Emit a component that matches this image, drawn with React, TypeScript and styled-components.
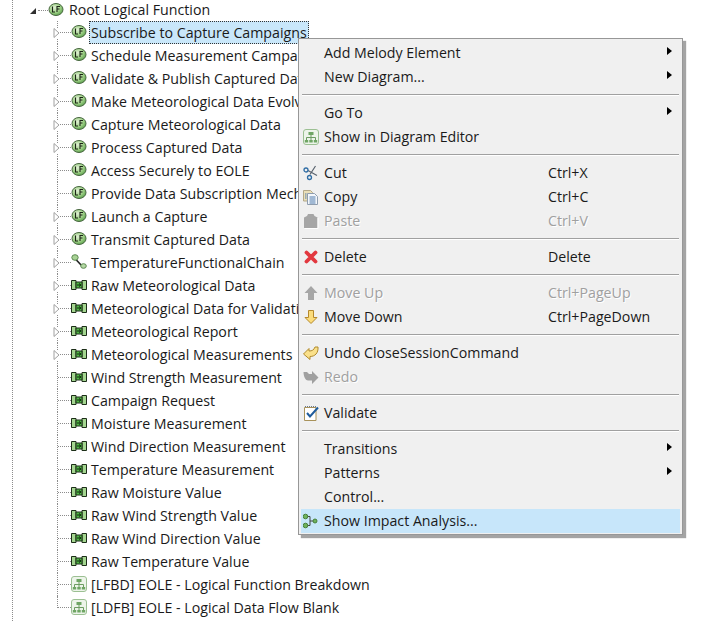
import React from 'react';
import styled, { createGlobalStyle } from 'styled-components';

const Global = createGlobalStyle`
	html, body {
		margin: 0;
		padding: 0;
		background: #ffffff;
	}
	#root {
		font-family: 'Open Sans', 'Noto Sans', 'Liberation Sans', sans-serif;
	}
`;

const Page = styled.div`
	position: relative;
	width: 702px;
	height: 621px;
	overflow: hidden;
	background: #ffffff;
	color: #1a1a1a;
	font-size: 14.2px;
`;

const Tree = styled.div`
	box-sizing: border-box;
	height: 621px;
	margin-left: 12px;
	border-left: 1px dotted #8c8c8c;
`;

const RootRow = styled.div`
	position: relative;
	display: flex;
	align-items: center;
	height: 21px;
	padding-left: 17px;
`;

const RootArrow = styled.span`
	width: 0;
	height: 0;
	margin-top: 1px;
	border-style: solid;
	border-width: 0 0 6px 6px;
	border-color: transparent transparent #303030 transparent;
`;

const RootDots = styled.span`
	width: 10px;
	margin-left: 2px;
	border-bottom: 1px dotted #8c8c8c;
`;

const RootLabel = styled.span`
	margin: -2px 0 0 5px;
	white-space: nowrap;
`;

const Children = styled.div`
	margin-left: 44px;
`;

const Row = styled.div<{ $last?: boolean }>`
	position: relative;
	display: flex;
	align-items: center;
	box-sizing: border-box;
	height: 23px;
	border-left: ${(p) => (p.$last ? 'none' : '1px dotted #8c8c8c')};
`;

const Elbow = styled.span<{ $last?: boolean }>`
	box-sizing: border-box;
	align-self: flex-start;
	width: ${(p) => (p.$last ? 14 : 13)}px;
	height: 12px;
	border-bottom: 1px dotted #8c8c8c;
	border-left: ${(p) => (p.$last ? '1px dotted #8c8c8c' : 'none')};
`;

const Twistie = styled.svg`
	position: absolute;
	left: -5px;
	top: 7px;
	width: 7px;
	height: 10px;
	background: #ffffff;
`;

const IconBox = styled.svg`
	flex: none;
	width: 16px;
	height: 16px;
	margin-top: -2px;
`;

const Label = styled.span<{ $selected?: boolean }>`
	box-sizing: border-box;
	display: block;
	height: 23px;
	margin-left: 2px;
	padding: 0 2px;
	line-height: 23px;
	white-space: nowrap;
	background: ${(p) => (p.$selected ? '#c9e7fa' : 'transparent')};
	outline: ${(p) => (p.$selected ? '1px dotted #333333' : 'none')};
	outline-offset: -1px;
`;

const Menu = styled.div`
	position: absolute;
	left: 298px;
	top: 38px;
	box-sizing: border-box;
	width: 385px;
	height: 497px;
	padding: 2px;
	background: #f0f0f0;
	border: 1px solid #979797;
	box-shadow: 3px 3px 1px rgba(90, 90, 90, 0.55);
`;

const MenuRow = styled.div<{ $active?: boolean; $disabled?: boolean }>`
	display: grid;
	grid-template-columns: 23px 224px 1fr 13px;
	align-items: center;
	height: 24px;
	color: ${(p) => (p.$disabled ? '#a0a0a0' : '#1a1a1a')};
	background: ${(p) => (p.$active ? '#c7e6fa' : 'transparent')};
	text-shadow: ${(p) => (p.$disabled ? '1px 1px 0 #ffffff' : 'none')};
`;

const MenuIcon = styled.span`
	display: flex;
	align-items: center;
	padding-left: 2px;
	height: 24px;
	svg {
		display: block;
	}
`;

const MenuText = styled.span`
	margin-top: -2px;
	white-space: nowrap;
`;

const Shortcut = styled.span`
	margin-top: -2px;
	white-space: nowrap;
`;

const SubArrow = styled.span`
	width: 0;
	height: 0;
	margin-top: -4px;
	border-style: solid;
	border-width: 4.5px 0 4.5px 5px;
	border-color: transparent transparent transparent #000000;
`;

const Separator = styled.div`
	box-sizing: border-box;
	height: 12px;
	padding-top: 5px;
	margin: 0 1px;
	&::after {
		content: '';
		display: block;
		height: 1px;
		background: #a0a0a0;
		box-shadow: 0 1px 0 #ffffff;
	}
`;

const FunctionIcon = () => (
	<IconBox viewBox="0 0 16 16">
		<defs>
			<radialGradient id="lf" cx="0.4" cy="0.35" r="0.75">
				<stop offset="0" stopColor="#e0f0d4" />
				<stop offset="0.55" stopColor="#9ccf84" />
				<stop offset="1" stopColor="#4c9440" />
			</radialGradient>
		</defs>
		<ellipse cx="8" cy="7.5" rx="7" ry="6" fill="url(#lf)" stroke="#46663e" />
		<path d="M4.500 4.500v5.500h2.500M9 10V4.500h3M9 7h2.500" fill="none" stroke="#1a2415" strokeWidth="1.100" />
	</IconBox>
);

const ExchangeIcon = () => (
	<IconBox viewBox="0 0 16 16">
		<path d="M.5 3.500h4.500v9H.5zM11 3.500h4.500v9H11z" fill="#a4d690" stroke="#1c2e18" />
		<path d="M5 5h6v6H5z" fill="#4fb544" stroke="#1c2e18" />
		<path d="M6 8h3.500M8 6.500L10 8 8 9.500" fill="none" stroke="#0f2a0c" />
	</IconBox>
);

const ChainIcon = () => (
	<IconBox viewBox="0 0 16 16">
		<path d="M4 4.500l7 7.500" stroke="#222222" strokeWidth="1.600" />
		<ellipse cx="4" cy="3.500" rx="3.200" ry="2.800" fill="#a9d396" stroke="#5d8a52" />
		<ellipse cx="12.500" cy="12" rx="2.800" ry="2.300" fill="#b5d8a5" stroke="#5d8a52" />
	</IconBox>
);

const DiagramIcon = () => (
	<svg viewBox="0 0 16 16" width="16" height="16">
		<rect x="0.5" y="0.5" width="15" height="15" rx="2.5" fill="#edf4ea" stroke="#9cc093" />
		<path d="M8 6v2.500M3.500 11V8.500h9V11M8 8.500V11" fill="none" stroke="#6d9c62" />
		<path d="M5.500 3h5v3h-5zM1.800 11h3.400v2.500H1.800zM6.300 11h3.400v2.500H6.300zM10.800 11h3.400v2.500h-3.400z" fill="#6fa564" />
	</svg>
);

const ScissorsIcon = () => (
	<svg viewBox="0 0 16 16" width="16" height="16" fill="none">
		<path d="M12.500 1L7 9.500M5 5.500l9 5" stroke="#59636e" strokeWidth="1.200" />
		<circle cx="3" cy="5" r="2" stroke="#2f6da5" strokeWidth="1.300" />
		<circle cx="6.500" cy="12.500" r="2" stroke="#2f6da5" strokeWidth="1.300" />
	</svg>
);

const CopyIcon = () => (
	<svg viewBox="0 0 16 16" width="16" height="16">
		<path d="M.5 1.500h7l2 2V12H.5z" fill="#eadfb8" stroke="#b3a888" />
		<path d="M4.500 4.500h7l3 3V15.500h-10z" fill="#f4f7fb" stroke="#8f9dae" />
		<path d="M6.500 8h6M6.500 10h6M6.500 12h6M6.500 14h6M2 5h1.500M2 7h1.500M2 9h1.500" stroke="#4f7bac" />
	</svg>
);

const PasteIcon = () => (
	<svg viewBox="0 0 16 16" width="16" height="16">
		<path d="M1 4.500l3-1.500 1-2h5.500l1 2 3 1.500V15H1z" fill="#a6a6a6" />
		<path d="M15 5v10.500H1.500" fill="none" stroke="#ffffff" />
	</svg>
);

const DeleteIcon = () => (
	<svg viewBox="0 0 16 16" width="16" height="16">
		<path d="M3.500 3.500l9 9M12.500 3.500l-9 9" stroke="#e2383f" strokeWidth="3.800" strokeLinecap="round" />
	</svg>
);

const MoveUpIcon = () => (
	<svg viewBox="0 0 16 16" width="16" height="16">
		<path d="M8 1l6.500 7H11v7H5V8H1.500z" fill="#a6a6a6" />
	</svg>
);

const MoveDownIcon = () => (
	<svg viewBox="0 0 16 16" width="16" height="16">
		<path d="M5.500 1.500h5v7H14L8 14.500 2 8.500h3.500z" fill="#fbdc7c" stroke="#b5892c" />
	</svg>
);

const UndoIcon = () => (
	<svg viewBox="0 0 16 16" width="16" height="16">
		<path d="M.5 9L6 3.500V6c3 0 5-1 6-4h3c.5 6-3 9.500-8 9.500v3z" fill="#fae08a" stroke="#b08a2c" strokeLinejoin="round" />
	</svg>
);

const RedoIcon = () => (
	<svg viewBox="0 0 16 16" width="16" height="16">
		<path d="M.5 3H4l2 2h3V2l6.500 6.500L9 15v-3.500H5C3 11.500.5 8 .5 3z" fill="#a0a0a0" />
	</svg>
);

const ValidateIcon = () => (
	<svg viewBox="0 0 16 16" width="16" height="16">
		<path d="M1.500 2.500h11.500v13H1.500z" fill="#ffffff" stroke="#a8925a" />
		<path d="M2 1.500h11" stroke="#6a7a90" strokeDasharray="1 1" />
		<path d="M4 8l3 3.500 8-9" fill="none" stroke="#1f5c9c" strokeWidth="2" />
	</svg>
);

const ImpactIcon = () => (
	<svg viewBox="0 0 16 16" width="16" height="16">
		<path d="M3 3.500h4v9H3M7 8h5" fill="none" stroke="#444444" />
		<circle cx="2.500" cy="3.500" r="2.300" fill="#6fb25c" stroke="#47803a" />
		<circle cx="2.500" cy="12.500" r="2.300" fill="#6fb25c" stroke="#47803a" />
		<circle cx="12" cy="8" r="2" fill="#6fb25c" stroke="#47803a" />
	</svg>
);

type Kind = 'function' | 'exchange' | 'chain' | 'diagram';

const nodes: { label: string; kind: Kind; open?: boolean }[] = [
	{ label: 'Subscribe to Capture Campaigns', kind: 'function', open: true },
	{ label: 'Schedule Measurement Campaigns', kind: 'function', open: true },
	{ label: 'Validate & Publish Captured Data', kind: 'function', open: true },
	{ label: 'Make Meteorological Data Evolve', kind: 'function', open: true },
	{ label: 'Capture Meteorological Data', kind: 'function', open: true },
	{ label: 'Process Captured Data', kind: 'function', open: true },
	{ label: 'Access Securely to EOLE', kind: 'function' },
	{ label: 'Provide Data Subscription Mechanism', kind: 'function' },
	{ label: 'Launch a Capture', kind: 'function', open: true },
	{ label: 'Transmit Captured Data', kind: 'function', open: true },
	{ label: 'TemperatureFunctionalChain', kind: 'chain', open: true },
	{ label: 'Raw Meteorological Data', kind: 'exchange', open: true },
	{ label: 'Meteorological Data for Validation', kind: 'exchange', open: true },
	{ label: 'Meteorological Report', kind: 'exchange', open: true },
	{ label: 'Meteorological Measurements', kind: 'exchange', open: true },
	{ label: 'Wind Strength Measurement', kind: 'exchange' },
	{ label: 'Campaign Request', kind: 'exchange' },
	{ label: 'Moisture Measurement', kind: 'exchange' },
	{ label: 'Wind Direction Measurement', kind: 'exchange' },
	{ label: 'Temperature Measurement', kind: 'exchange' },
	{ label: 'Raw Moisture Value', kind: 'exchange' },
	{ label: 'Raw Wind Strength Value', kind: 'exchange' },
	{ label: 'Raw Wind Direction Value', kind: 'exchange' },
	{ label: 'Raw Temperature Value', kind: 'exchange' },
	{ label: '[LFBD] EOLE - Logical Function Breakdown', kind: 'diagram' },
	{ label: '[LDFB] EOLE - Logical Data Flow Blank', kind: 'diagram' },
];

function NodeIcon({ kind }: { kind: Kind }) {
	if (kind === 'function') return <FunctionIcon />;
	if (kind === 'exchange') return <ExchangeIcon />;
	if (kind === 'chain') return <ChainIcon />;
	return (
		<IconBox as="span">
			<DiagramIcon />
		</IconBox>
	);
}

type Entry =
	| 'sep'
	| {
			label: string;
			icon?: React.ReactNode;
			shortcut?: string;
			sub?: boolean;
			disabled?: boolean;
			active?: boolean;
	  };

const entries: Entry[] = [
	{ label: 'Add Melody Element', sub: true },
	{ label: 'New Diagram...', sub: true },
	'sep',
	{ label: 'Go To', sub: true },
	{ label: 'Show in Diagram Editor', icon: <DiagramIcon /> },
	'sep',
	{ label: 'Cut', icon: <ScissorsIcon />, shortcut: 'Ctrl+X' },
	{ label: 'Copy', icon: <CopyIcon />, shortcut: 'Ctrl+C' },
	{ label: 'Paste', icon: <PasteIcon />, shortcut: 'Ctrl+V', disabled: true },
	'sep',
	{ label: 'Delete', icon: <DeleteIcon />, shortcut: 'Delete' },
	'sep',
	{ label: 'Move Up', icon: <MoveUpIcon />, shortcut: 'Ctrl+PageUp', disabled: true },
	{ label: 'Move Down', icon: <MoveDownIcon />, shortcut: 'Ctrl+PageDown' },
	'sep',
	{ label: 'Undo CloseSessionCommand', icon: <UndoIcon /> },
	{ label: 'Redo', icon: <RedoIcon />, disabled: true },
	'sep',
	{ label: 'Validate', icon: <ValidateIcon /> },
	'sep',
	{ label: 'Transitions', sub: true },
	{ label: 'Patterns', sub: true },
	{ label: 'Control...' },
	{ label: 'Show Impact Analysis...', icon: <ImpactIcon />, active: true },
];

function App() {
	return (
		<Page>
			<Global />
			<Tree>
				<RootRow>
					<RootArrow />
					<RootDots />
					<FunctionIcon />
					<RootLabel>Root Logical Function</RootLabel>
				</RootRow>
				<Children>
					{nodes.map((node, i) => {
						const last = i === nodes.length - 1;
						return (
							<Row key={node.label} $last={last}>
								<Elbow $last={last} />
								{node.open && (
									<Twistie viewBox="0 0 7 10">
										<path d="M1 .5l5 4.500-5 4.500z" fill="#ffffff" stroke="#a0a0a0" />
									</Twistie>
								)}
								<NodeIcon kind={node.kind} />
								<Label $selected={i === 0}>{node.label}</Label>
							</Row>
						);
					})}
				</Children>
			</Tree>
			<Menu>
				{entries.map((entry, i) =>
					entry === 'sep' ? (
						<Separator key={i} />
					) : (
						<MenuRow key={entry.label} $active={entry.active} $disabled={entry.disabled}>
							<MenuIcon>{entry.icon}</MenuIcon>
							<MenuText>{entry.label}</MenuText>
							<Shortcut>{entry.shortcut}</Shortcut>
							{entry.sub ? <SubArrow /> : <span />}
						</MenuRow>
					),
				)}
			</Menu>
		</Page>
	);
}

export default App;
